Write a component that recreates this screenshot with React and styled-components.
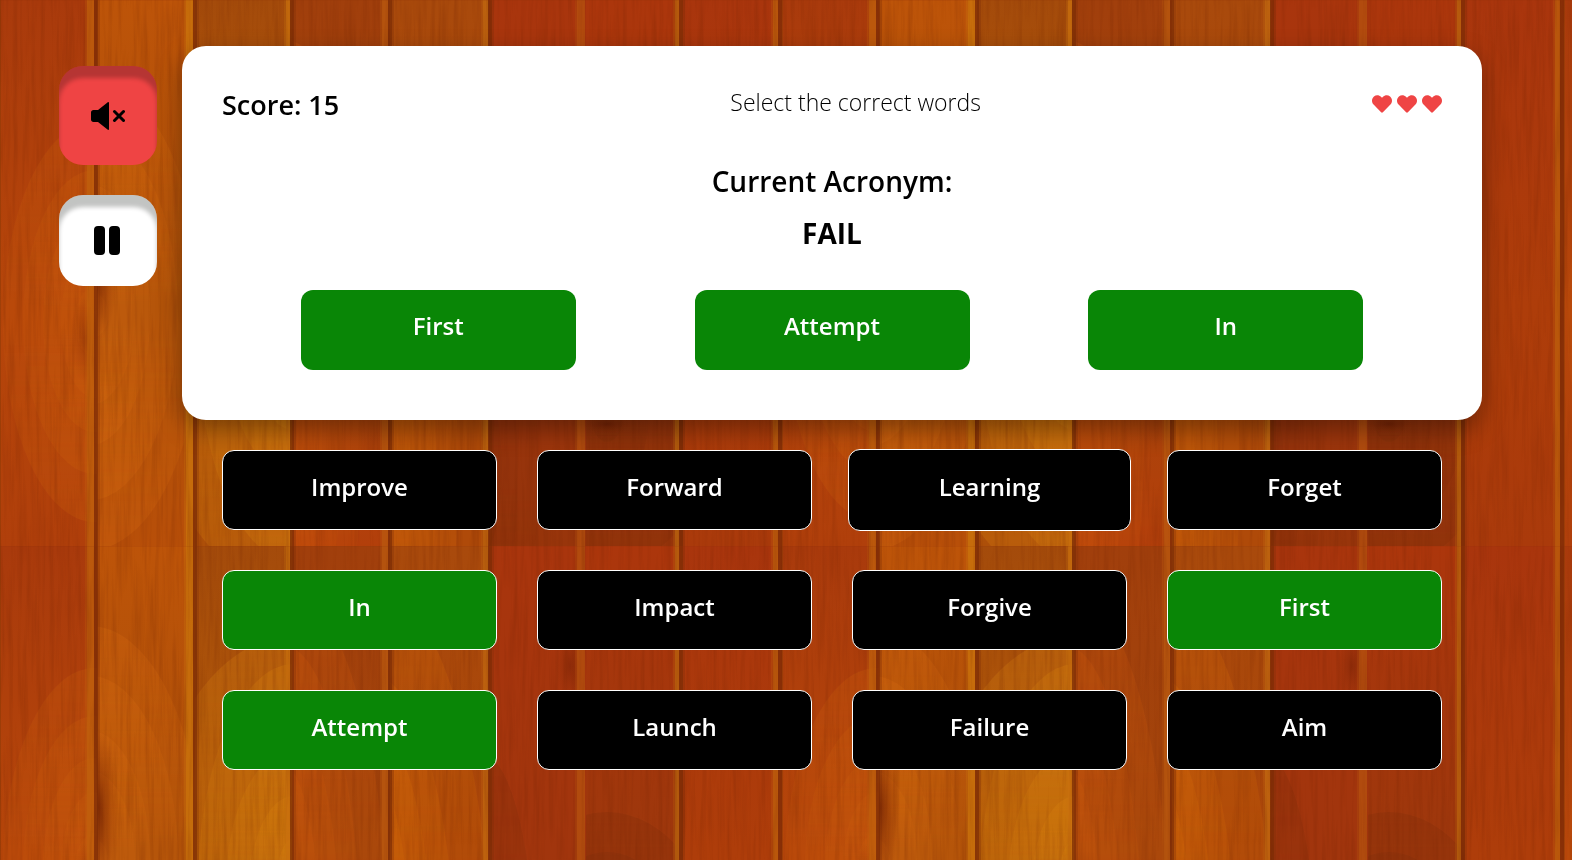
import React from "react";
import styled, { createGlobalStyle, css } from "styled-components";
import { FaHeart } from "react-icons/fa";

const GlobalStyle = createGlobalStyle`
  *, *::before, *::after { box-sizing: border-box; }
  body {
    margin: 0;
    background: #ad450a;
    color: #000;
    font-family: "Segoe UI", "Open Sans", "Noto Sans", sans-serif;
  }
  h1, h2, p, ul, ol { margin: 0; padding: 0; }
`;

const Backdrop = styled.svg`
  position: fixed;
  inset: 0;
  z-index: -1;
  width: 100%;
  height: 100%;
`;

const Page = styled.div`
  display: flex;
  align-items: flex-start;
  gap: 25px;
  min-height: 100vh;
  padding: 46px 90px 90px 59px;
`;

const Controls = styled.nav`
  display: flex;
  flex: none;
  flex-direction: column;
  gap: 30px;
  width: 98px;
  padding-top: 20px;
`;

const ControlButton = styled.button`
  display: flex;
  align-items: center;
  justify-content: center;
  height: ${(p) => (p.$danger ? "99px" : "91px")};
  padding: ${(p) => (p.$danger ? "0" : "0 2px 0 0")};
  border: 0;
  border-radius: 24px;
  background: ${(p) => (p.$danger ? "#ef4444" : "#fff")};
  box-shadow: inset 0 12px 4px rgba(0, 8, 0, 0.24);
  cursor: pointer;
`;

const Game = styled.main`
  flex: 1;
  min-width: 0;
`;

const Card = styled.section`
  padding: 40px 40px 50px;
  border-radius: 24px;
  background: #fff;
  box-shadow: 0 10px 24px rgba(0, 0, 0, 0.35);
`;

const CardHeader = styled.header`
  display: flex;
  align-items: flex-start;
  justify-content: space-between;
  margin-bottom: 41px;
`;

const Score = styled.p`
  font-size: 27px;
  font-weight: 600;
  line-height: 38px;
`;

const Instruction = styled.p`
  font-size: 23px;
  font-weight: 300;
  line-height: 32px;
`;

const Lives = styled.ul`
  display: flex;
  gap: 5px;
  padding-top: 8px;
  color: #ef4444;
  list-style: none;

  li { display: flex; }
`;

const Acronym = styled.div`
  display: flex;
  flex-direction: column;
  align-items: center;
  gap: 20px;
  margin-bottom: 41px;
  font-size: 28px;
  line-height: 32px;
`;

const AcronymLabel = styled.h2`
  font-size: inherit;
  font-weight: 600;
`;

const AcronymValue = styled.p`
  font-weight: 700;
`;

const tile = css`
  height: 80px;
  border-radius: 12px;
  color: #fff;
  font-family: inherit;
  font-size: 24px;
  font-weight: 600;
  line-height: 32px;
`;

const Answers = styled.ol`
  display: flex;
  justify-content: space-evenly;
  gap: 40px;
  list-style: none;
`;

const Answer = styled.li`
  ${tile}
  display: flex;
  flex: 0 1 275px;
  align-items: center;
  justify-content: center;
  padding: 0 8px 8px;
  background: #098606;
`;

const Words = styled.div`
  display: grid;
  grid-template-columns: repeat(4, minmax(0, 1fr));
  gap: 40px;
  padding: 30px 40px 0;
`;

const Word = styled.button`
  ${tile}
  padding: 0 8px 6px;
  border: 1px solid #fff;
  background: ${(p) => (p.$chosen ? "#098606" : "#000")};
  cursor: pointer;

  ${(p) =>
    p.$raised &&
    css`
      height: 82px;
      margin: -1px -4px;
    `}
`;

const BOARDS = [
  { x: 0, w: 97, top: "#a93a0c", mid: "#b6460a", low: "#b03f0b" },
  { x: 97, w: 98, top: "#bd5409", mid: "#ac4f08", low: "#b84f09" },
  { x: 195, w: 97, top: "#a44b0b", mid: "#b45b08", low: "#ad4f09" },
  { x: 292, w: 98, top: "#a13f0c", mid: "#a4450b", low: "#ae3b0a" },
  { x: 390, w: 99, top: "#a94a0c", mid: "#aa4509", low: "#a94509" },
  { x: 489, w: 97, top: "#a9350d", mid: "#a1350d", low: "#98350b" },
  { x: 586, w: 97, top: "#ac360c", mid: "#9d370c", low: "#98350b" },
  { x: 683, w: 99, top: "#a9350d", mid: "#ae3d0a", low: "#aa3a0b" },
];

const EDGES = [
  { x: 87, w: 7, color: "#c0600c" },
  { x: 186, w: 7, color: "#cb730c" },
  { x: 286, w: 4, color: "#c9700d" },
  { x: 382, w: 6, color: "#b9590e" },
  { x: 483, w: 5, color: "#c2680f" },
  { x: 577, w: 8, color: "#b5520e" },
  { x: 675, w: 4, color: "#b9640d" },
  { x: 773, w: 5, color: "#bd5e0c" },
];

const RINGS = [
  { board: 0, cx: 95, cy: 322, tone: "#cc620c", sizes: [[20, 35], [34, 76], [52, 110], [72, 152], [92, 200]] },
  { board: 1, cx: 90, cy: 315, tone: "#d66c10", sizes: [[18, 24], [45, 90], [60, 130], [88, 185], [112, 235]] },
  { board: 2, cx: 294, cy: 340, tone: "#dc8610", sizes: [[18, 48], [44, 90], [68, 136], [96, 222], [150, 250]] },
  { board: 3, cx: 284, cy: 430, tone: "#cc5a0a", sizes: [[38, 210], [58, 270], [78, 330], [106, 390]] },
  { board: 4, cx: 374, cy: 470, tone: "#d86a08", sizes: [[40, 240], [62, 290], [84, 340], [120, 430]] },
  { board: 5, cx: 484, cy: 470, tone: "#7a2b08", sizes: [[18, 80], [34, 160], [54, 260]] },
  { board: 6, cx: 607, cy: 416, tone: "#7a2b08", sizes: [[16, 26], [42, 70], [76, 110], [110, 150]] },
];

function Wood() {
  return (
    <Backdrop aria-hidden="true">
      <defs>
        {BOARDS.map((b, i) => (
          <React.Fragment key={b.x}>
            <linearGradient id={`board${i}`} x1="0" y1="0" x2="0" y2="1">
              <stop offset="0" stopColor={b.top} />
              <stop offset="0.56" stopColor={b.mid} />
              <stop offset="1" stopColor={b.low} />
            </linearGradient>
            <clipPath id={`clip${i}`}>
              <rect x={b.x} width={b.w} height="546" />
            </clipPath>
          </React.Fragment>
        ))}
        <linearGradient id="ring" x1="0" y1="0" x2="0" y2="1">
          <stop offset="0" stopColor="#fff" />
          <stop offset="0.45" stopColor="#777" />
          <stop offset="0.55" stopColor="#777" />
          <stop offset="1" stopColor="#fff" />
        </linearGradient>
        <mask id="ringMask" maskContentUnits="objectBoundingBox">
          <rect width="1" height="1" fill="url(#ring)" />
        </mask>
        <radialGradient id="knot">
          <stop offset="0" stopColor="#6b1c03" stopOpacity="0.75" />
          <stop offset="1" stopColor="#8a2d05" stopOpacity="0" />
        </radialGradient>
        <filter id="grain" x="0" y="0" width="100%" height="100%" colorInterpolationFilters="sRGB">
          <feTurbulence type="fractalNoise" baseFrequency="0.22 0.012" numOctaves="3" seed="4" />
          <feColorMatrix values="0 0 0 0 0.42  0 0 0 0 0.12  0 0 0 0 0  1.8 0 0 0 -0.75" />
        </filter>
        <pattern id="wood" width="782" height="546" patternUnits="userSpaceOnUse">
          {BOARDS.map((b, i) => (
            <rect key={b.x} x={b.x} width={b.w} height="546" fill={`url(#board${i})`} />
          ))}
          {RINGS.map((r) => (
            <g key={r.board} clipPath={`url(#clip${r.board})`}>
              {r.sizes.map(([rx, ry]) => (
                <ellipse
                  key={rx}
                  cx={r.cx}
                  cy={r.cy}
                  rx={rx}
                  ry={ry}
                  fill={r.tone}
                  fillOpacity="0.26"
                  mask="url(#ringMask)"
                />
              ))}
            </g>
          ))}
          <g clipPath="url(#clip0)">
            <ellipse cx="86" cy="340" rx="16" ry="44" fill="url(#knot)" opacity="0.5" />
          </g>
          <g clipPath="url(#clip1)">
            <ellipse cx="98" cy="262" rx="20" ry="80" fill="url(#knot)" />
          </g>
          <ellipse cx="570" cy="120" rx="14" ry="38" fill="url(#knot)" opacity="0.6" />
          <ellipse cx="607" cy="424" rx="24" ry="10" fill="url(#knot)" opacity="0.8" />
          {EDGES.map((e) => (
            <g key={e.x}>
              <rect x={e.x - 2} width={e.w + 2} height="546" fill={e.color} opacity="0.3" />
              <rect x={e.x} width={e.w} height="546" fill={e.color} opacity="0.7" />
              {e.w < 8 && (
                <>
                  <rect x={e.x + e.w} width="4" height="546" fill="#7c2c05" opacity="0.75" />
                  <rect x={e.x + e.w + 4} width="2" height="546" fill="#7c2c05" opacity="0.3" />
                </>
              )}
            </g>
          ))}
          <rect width="1" height="546" fill="#8a3a05" opacity="0.5" />
          <rect width="782" height="1" fill="#8a2d05" opacity="0.15" />
        </pattern>
      </defs>
      <rect width="100%" height="100%" fill="url(#wood)" />
      <rect width="100%" height="100%" filter="url(#grain)" opacity="0.24" />
    </Backdrop>
  );
}

function MuteIcon() {
  return (
    <svg width="34" height="28" viewBox="0 0 34 28" aria-hidden="true">
      <path d="M2.500 8H7L16.500.400C17.300-.200 18 .1 18 1V27C18 27.900 17.300 28.200 16.500 27.600L7 20H2.500C1 20 0 19 0 17.500V10.500C0 9 1 8 2.500 8Z" />
      <path d="M23.500 9.500L32.500 18.500M32.500 9.500L23.500 18.500" fill="none" stroke="#000" strokeWidth="3" strokeLinecap="round" />
    </svg>
  );
}

function PauseIcon() {
  return (
    <svg width="26" height="29" viewBox="0 0 26 29" aria-hidden="true">
      <rect width="11" height="29" rx="4" />
      <rect x="15" width="11" height="29" rx="4" />
    </svg>
  );
}

const ANSWERS = ["First", "Attempt", "In"];

const WORDS = [
  { text: "Improve" },
  { text: "Forward" },
  { text: "Learning", raised: true },
  { text: "Forget" },
  { text: "In", chosen: true },
  { text: "Impact" },
  { text: "Forgive" },
  { text: "First", chosen: true },
  { text: "Attempt", chosen: true },
  { text: "Launch" },
  { text: "Failure" },
  { text: "Aim" },
];

export default function App() {
  return (
    <>
      <GlobalStyle />
      <Wood />
      <Page>
        <Controls aria-label="Game controls">
          <ControlButton type="button" $danger aria-label="Unmute">
            <MuteIcon />
          </ControlButton>
          <ControlButton type="button" aria-label="Pause">
            <PauseIcon />
          </ControlButton>
        </Controls>
        <Game>
          <Card>
            <CardHeader>
              <Score>Score: 15</Score>
              <Instruction>Select the correct words</Instruction>
              <Lives aria-label="Lives left">
                {[1, 2, 3].map((life) => (
                  <li key={life}>
                    <FaHeart size={20} />
                  </li>
                ))}
              </Lives>
            </CardHeader>
            <Acronym>
              <AcronymLabel>Current Acronym:</AcronymLabel>
              <AcronymValue>FAIL</AcronymValue>
            </Acronym>
            <Answers>
              {ANSWERS.map((word) => (
                <Answer key={word}>{word}</Answer>
              ))}
            </Answers>
          </Card>
          <Words>
            {WORDS.map((word) => (
              <Word key={word.text} type="button" $chosen={word.chosen} $raised={word.raised}>
                {word.text}
              </Word>
            ))}
          </Words>
        </Game>
      </Page>
    </>
  );
}
